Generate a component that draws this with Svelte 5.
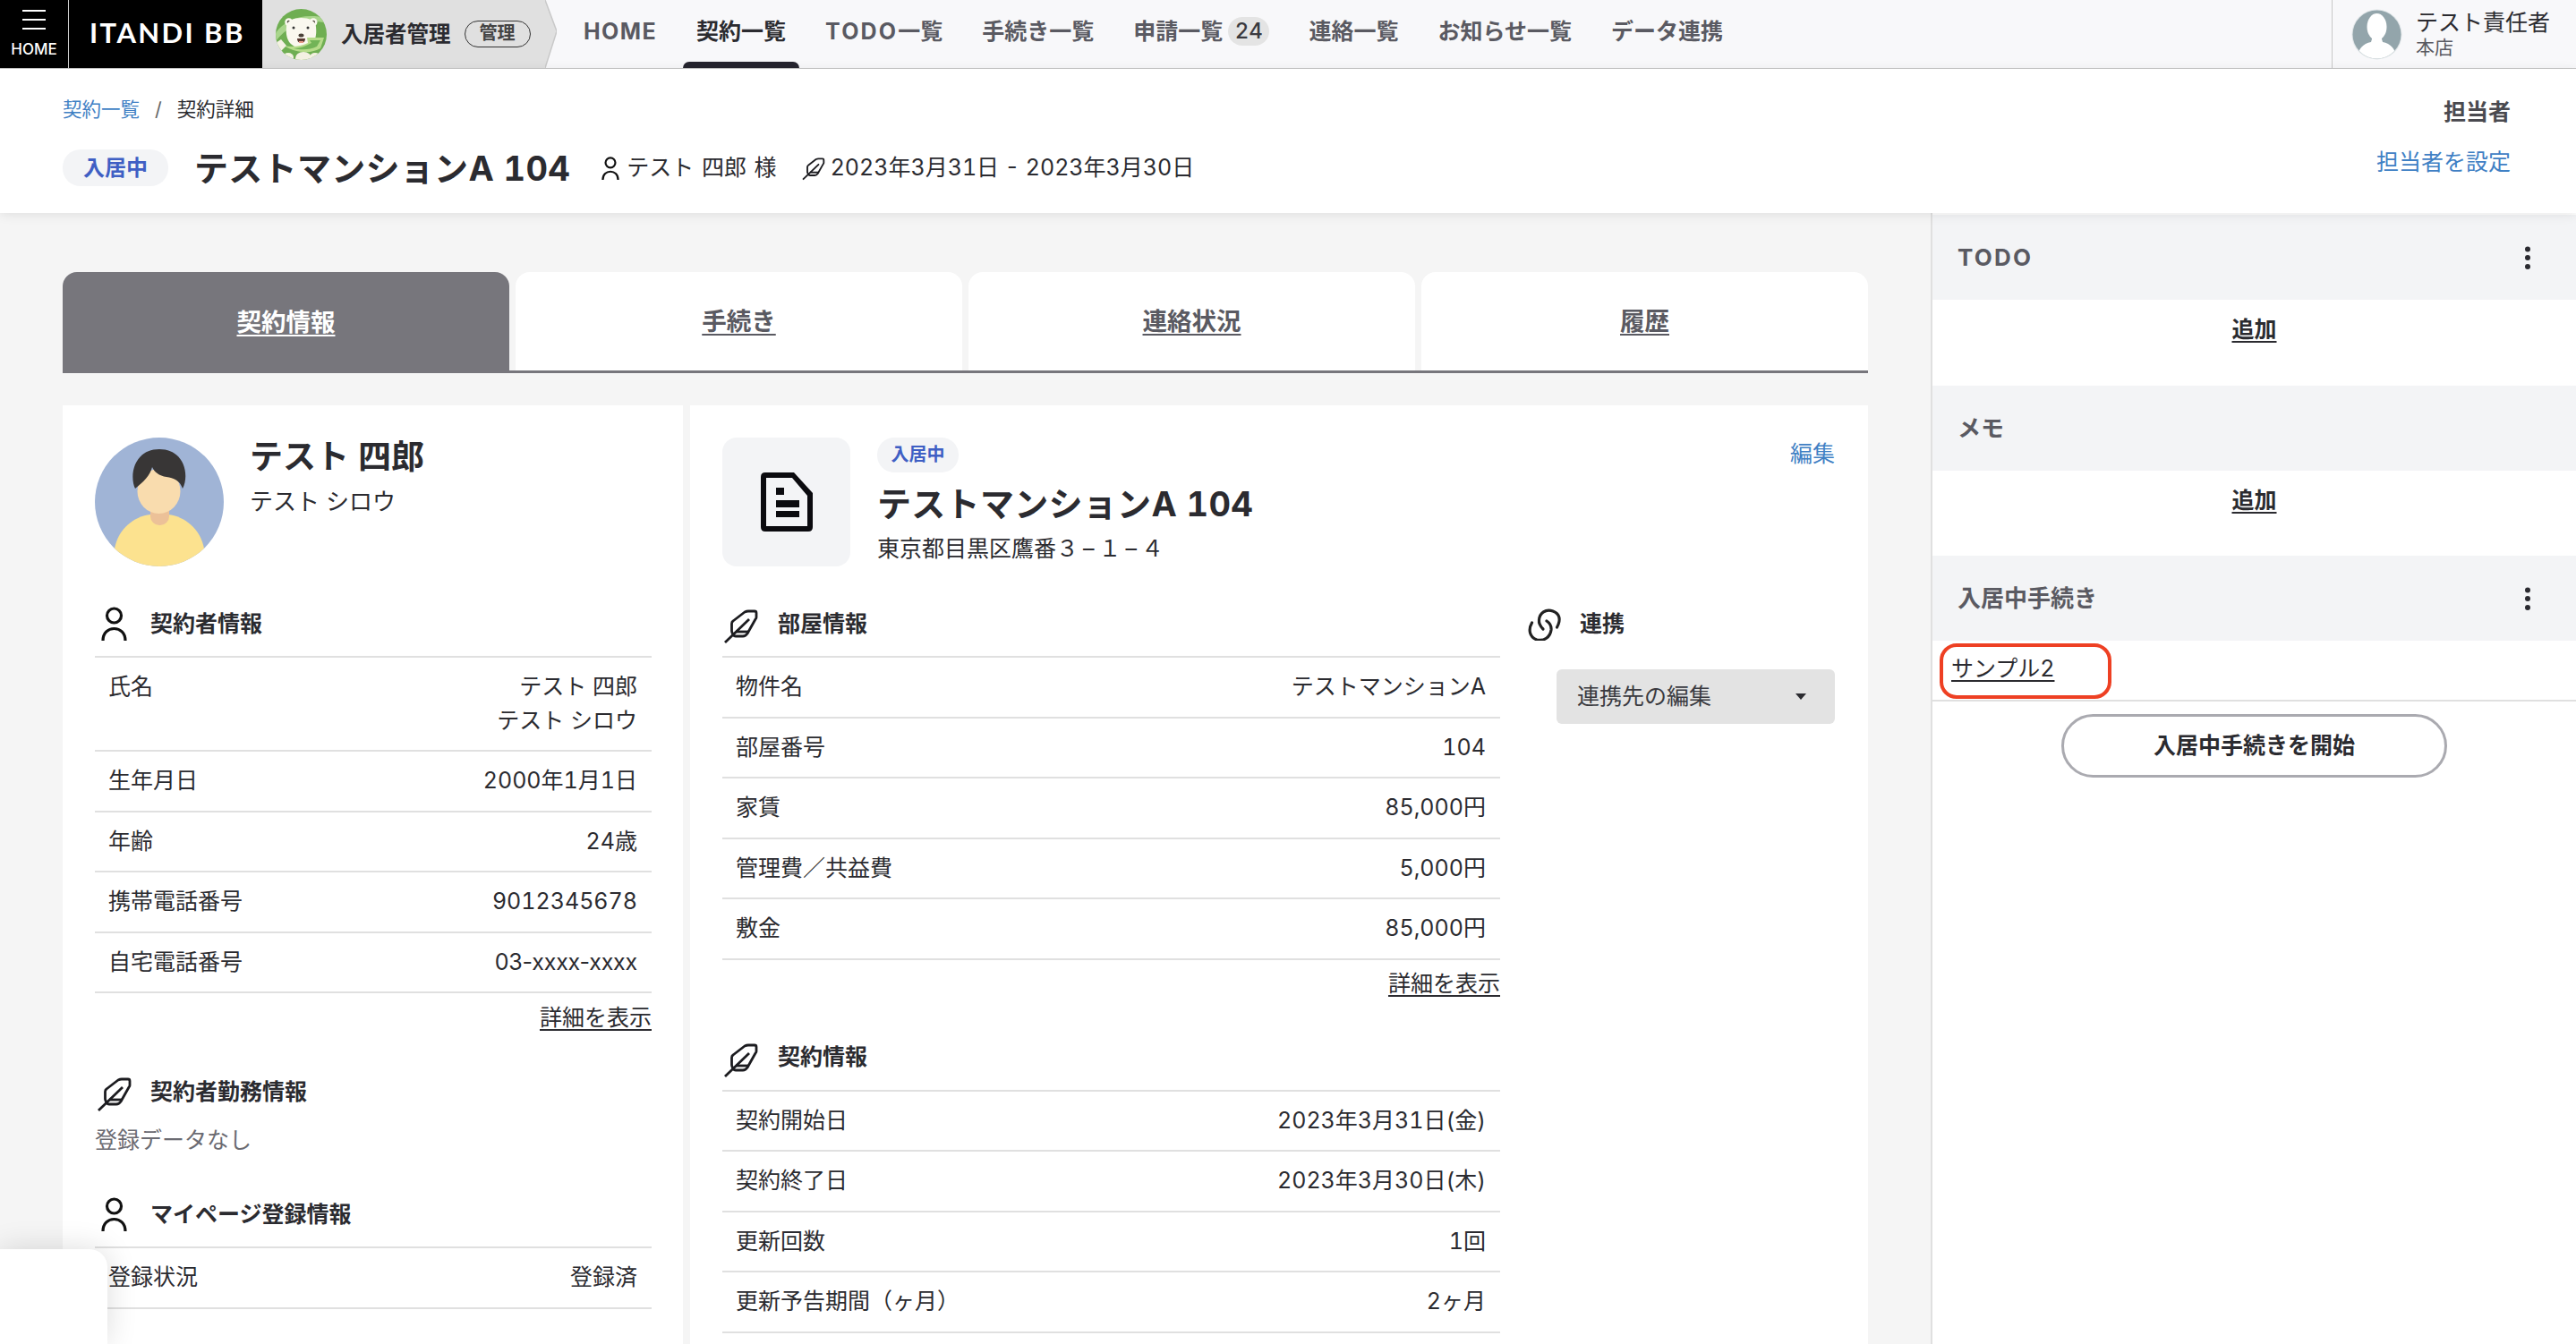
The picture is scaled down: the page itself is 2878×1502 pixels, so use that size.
<script>
  const nav2 = ['連絡一覧', 'お知らせ一覧', 'データ連携'];
  const tabs = ['契約情報', '手続き', '連絡状況', '履歴'];
  const contractor = [
    ['生年月日', '2000年1月1日'],
    ['年齢', '24歳'],
    ['携帯電話番号', '9012345678'],
    ['自宅電話番号', '03-xxxx-xxxx', 'prop-num']
  ];
  const room = [
    ['物件名', 'テストマンションA'],
    ['部屋番号', '104'],
    ['家賃', '85,000円'],
    ['管理費／共益費', '5,000円'],
    ['敷金', '85,000円']
  ];
  const contract = [
    ['契約開始日', '2023年3月31日(金)'],
    ['契約終了日', '2023年3月30日(木)'],
    ['更新回数', '1回'],
    ['更新予告期間（ヶ月）', '2ヶ月']
  ];
</script>

{#snippet person(cls)}
  <svg class={cls} viewBox="0 0 29 38" fill="none" stroke="#111" stroke-width="3.2">
    <circle cx="14.5" cy="10" r="8" />
    <path d="M2 38C2 29 8 24.500 14.500 24.500S27 29 27 38" />
  </svg>
{/snippet}

{#snippet feather(cls)}
  <svg class={cls} viewBox="8 8 40 42" fill="none" stroke="#1c1c20" stroke-width="2.800" stroke-linejoin="round">
    <path d="M17.500 27Q17.500 25 19 24L32 14Q34 13 36 13H43Q45 13 45 15V20Q45 21 44 22L35 38Q33 41 30 41H22Q20 41 19 39L18 37Q17.500 36 17.500 35Z" />
    <path d="M10 48L37 22" />
    <path d="M22 36H37" />
  </svg>
{/snippet}

{#snippet rows(list)}
  {#each list as r}
    <div class="row"><span>{r[0]}</span><span class={r[2]}>{r[1]}</span></div>
  {/each}
{/snippet}

{#snippet dots()}
  <svg class="dots" viewBox="0 0 8 26" fill="#2a2a30">
    <circle cx="4" cy="3.500" r="3" /><circle cx="4" cy="13" r="3" /><circle cx="4" cy="23" r="3" />
  </svg>
{/snippet}

<div class="page">
  <header class="top">
    <div class="ham">
      <span class="bars"><i></i><i></i><i></i></span>
      <span class="homelabel">HOME</span>
    </div>
    <div class="brand">ITANDI BB</div>
    <div class="product">
      <svg class="bear" viewBox="0 0 57 57">
        <defs><clipPath id="bearclip"><circle cx="28.500" cy="28.500" r="28.500" /></clipPath></defs>
        <g clip-path="url(#bearclip)">
          <rect width="57" height="57" fill="#6fae52" />
          <path d="M0 27C10 12 30 4 57 10V16C35 10 14 18 0 36Z" fill="#a9d58c" />
          <circle cx="14.700" cy="14.700" r="4.500" fill="#faf8ef" />
          <circle cx="42" cy="14.700" r="4.500" fill="#faf8ef" />
          <circle cx="14.700" cy="14.700" r="2" fill="#4a4138" />
          <circle cx="42" cy="14.700" r="2" fill="#4a4138" />
          <path d="M12 20C12 13 20 10 28.500 10C37 10 45 13 45 20C46 30 45 42 28.500 44C13 42 11 30 12 20Z" fill="#faf8ef" />
          <circle cx="20" cy="21" r="1.500" fill="#333" />
          <circle cx="36" cy="21" r="1.500" fill="#333" />
          <ellipse cx="28.500" cy="29.500" rx="3" ry="2" fill="#4a4138" />
          <path d="M24 33H33Q33 38 28.500 38Q24 38 24 33Z" fill="#5a3a33" />
          <path d="M26 36H31V38H26Z" fill="#e79a86" />
          <path d="M35 32H54L50 44C40 50 24 50 9 41C18 43 28 42 36 38Z" fill="#b6dc8a" />
          <path d="M38 35H50L46 42C38 46 28 46 20 44C28 44 34 41 40 38Z" fill="#72b457" />
          <ellipse cx="31" cy="55" rx="9" ry="7" fill="#f4f1e2" />
          <ellipse cx="14" cy="54" rx="6" ry="5" fill="#f4f1e2" />
          <ellipse cx="44" cy="54" rx="6" ry="5" fill="#f4f1e2" />
          <path d="M0 38L6 34L12 41L6 47Z" fill="#f4f1e2" />
        </g>
      </svg>
      <span class="pname">入居者管理</span>
      <span class="ptag">管理</span>
    </div>
    <svg class="chev" viewBox="0 0 13 76">
      <polygon points="0,0 13,35 0,76" fill="#e0e0e0" />
      <polyline points="0,0 13,35 0,76" fill="none" stroke="#c9c9c9" stroke-width="1.500" />
    </svg>
    <nav class="nav">
      <span class="navitem"><span class="lat home">HOME</span></span>
      <span class="navitem on">契約一覧</span>
      <span class="navitem"><span class="lat">TODO</span>一覧</span>
      <span class="navitem">手続き一覧</span>
      <span class="navitem">申請一覧<b class="badge">24</b></span>
      {#each nav2 as n}<span class="navitem">{n}</span>{/each}
    </nav>
    <div class="user">
      <svg class="uava" viewBox="0 0 57 57">
        <defs><clipPath id="uclip"><circle cx="28.500" cy="28.500" r="27" /></clipPath></defs>
        <circle cx="28.500" cy="28.500" r="28" fill="#dfe5e7" />
        <g clip-path="url(#uclip)">
          <rect width="57" height="57" fill="#93a5ab" />
          <ellipse cx="28.500" cy="20" rx="11" ry="15" fill="#fff" />
          <path d="M24 30H33L35 37C44 39 50 44 50 57H7C7 44 13 39 22 37Z" fill="#fff" />
        </g>
      </svg>
      <div class="uinfo">
        <span class="uname">テスト責任者</span>
        <span class="ustore">本店</span>
      </div>
    </div>
  </header>

  <section class="sub">
    <div>
      <div class="crumbs"><span class="blue">契約一覧</span><span class="slash">/</span><span>契約詳細</span></div>
      <div class="titlerow">
        <span class="pill big">入居中</span>
        <h1 class="title">テストマンションA 104</h1>
        {@render person('subicon person1')}
        <span class="meta tenant">テスト 四郎 様</span>
        {@render feather('subicon feather1')}
        <span class="meta">2023年3月31日 - 2023年3月30日</span>
      </div>
    </div>
    <div class="owner">
      <strong>担当者</strong>
      <span class="blue">担当者を設定</span>
    </div>
  </section>

  <div class="body">
    <main class="main">
      <div class="tabs">
        {#each tabs as t, i}
          <div class="tab" class:sel={i === 0}><span>{t}</span></div>
        {/each}
      </div>
      <div class="cards">
        <article class="card left">
          <div class="profile">
            <svg class="avatar" viewBox="0 0 144 144">
              <defs><clipPath id="avclip"><circle cx="72" cy="72" r="72" /></clipPath></defs>
              <circle cx="72" cy="72" r="72" fill="#a0b4d6" />
              <g clip-path="url(#avclip)">
                <path d="M22 124C26 102 44 88 62 86H82C100 88 118 102 122 124V144H22Z" fill="#fce28f" />
                <rect x="62" y="70" width="21" height="28" rx="10" fill="#ecc198" />
                <ellipse cx="71.500" cy="60" rx="24" ry="25" fill="#f9dcae" />
                <path d="M45 57C38 42 44 13 72 13C100 13 106 42 98 57C95 48 88 45 80 44C72 43 66 38 64 33C62 42 54 50 45 57Z" fill="#383636" />
              </g>
            </svg>
            <div>
              <div class="pername">テスト 四郎</div>
              <div class="perkana">テスト シロウ</div>
            </div>
          </div>

          <div class="head ruled">
            <span class="hicon">{@render person('hperson')}</span>
            <strong>契約者情報</strong>
          </div>
          <div class="row">
            <span>氏名</span>
            <span class="stack"><span>テスト 四郎</span><span>テスト シロウ</span></span>
          </div>
          {@render rows(contractor)}
          <div class="more"><u>詳細を表示</u></div>

          <div class="head spaced">
            <span class="hicon">{@render feather('hfeather')}</span>
            <strong>契約者勤務情報</strong>
          </div>
          <div class="none">登録データなし</div>

          <div class="head ruled spaced">
            <span class="hicon">{@render person('hperson')}</span>
            <strong>マイページ登録情報</strong>
          </div>
          <div class="row"><span>登録状況</span><span>登録済</span></div>
        </article>

        <article class="card right">
          <div class="prop">
            <div class="docbox">
              <svg class="doc" viewBox="0 0 58 66">
                <path fill-rule="evenodd" d="M5 0H37L58 23V61Q58 66 53 66H5Q0 66 0 61V5Q0 0 5 0ZM6 6V60H52V26L35 6Z" fill="#0b0b0f" />
                <path d="M17 17H26V25H17ZM17 31H43V39H17ZM17 43H43V50H17Z" fill="#0b0b0f" />
              </svg>
            </div>
            <div class="propinfo">
              <span class="pill small">入居中</span>
              <div class="proptitle">テストマンションA 104</div>
              <div class="addr">東京都目黒区鷹番<span class="addrnum">３–１–４</span></div>
            </div>
            <span class="blue edit">編集</span>
          </div>

          <div class="cols">
            <div class="colmain">
              <div class="head ruled">
                <span class="hicon">{@render feather('hfeather')}</span>
                <strong>部屋情報</strong>
              </div>
              {@render rows(room)}
              <div class="more"><u>詳細を表示</u></div>
              <div class="head ruled spaced">
                <span class="hicon">{@render feather('hfeather')}</span>
                <strong>契約情報</strong>
              </div>
              {@render rows(contract)}
            </div>
            <div class="colside">
              <div class="head plain">
                <span class="hicon">
                  <svg class="hlink" viewBox="7 7 38 38" fill="none" stroke="#222" stroke-width="3.200" stroke-linecap="round">
                    <path d="M39.500 30C44 22 43 15 35 12C27 9 20 14 19.500 22C19 26 21 29 24 32" />
                    <path d="M11.500 25C7 33 9 41 17 44C25 46 32 41 33 33C33.500 28 31 25 28 23" />
                  </svg>
                </span>
                <strong>連携</strong>
              </div>
              <div class="select"><span>連携先の編集</span><i class="caret"></i></div>
            </div>
          </div>
        </article>
      </div>
    </main>

    <aside class="side">
      <div class="sidehead"><span class="sidetodo">TODO</span>{@render dots()}</div>
      <div class="sidebody"><u>追加</u></div>
      <div class="sidehead"><span>メモ</span></div>
      <div class="sidebody"><u>追加</u></div>
      <div class="sidehead"><span>入居中手続き</span>{@render dots()}</div>
      <div class="procrow">
        <u>サンプル2</u>
        <span class="mark"></span>
      </div>
      <div class="startwrap"><span class="start">入居中手続きを開始</span></div>
    </aside>
  </div>

  <div class="widget"></div>
</div>

<style>
  :global(body) {
    margin: 0;
  }
  .page {
    position: relative;
    width: 2878px;
    height: 1502px;
    overflow: hidden;
    background: #f5f5f5;
    color: #2b2b30;
    font-family: "Inter", "Noto Sans CJK JP", sans-serif;
    font-variant-numeric: tabular-nums;
    font-size: 25px;
    line-height: 37px;
  }
  .top {
    display: flex;
    align-items: stretch;
    height: 76px;
    background: #f8f8fa;
    border-bottom: 1.5px solid #c8c8c8;
  }
  .ham {
    width: 77px;
    box-sizing: border-box;
    background: #000;
    border-right: 1px solid #d0d0d0;
    color: #fff;
    display: flex;
    flex-direction: column;
    align-items: center;
  }
  .bars {
    display: flex;
    flex-direction: column;
    gap: 8px;
    margin-top: 11px;
  }
  .bars i {
    display: block;
    width: 26px;
    height: 2px;
    background: #fff;
  }
  .homelabel {
    font-size: 17px;
    line-height: 20px;
    margin-top: 12px;
    font-weight: 500;
  }
  .brand {
    width: 216px;
    box-sizing: border-box;
    background: #000;
    color: #fff;
    padding-left: 23px;
    font-size: 31px;
    line-height: 73px;
    letter-spacing: 2.400px;
    font-family: "Lato", "Liberation Sans", sans-serif;
    font-weight: 700;
    white-space: nowrap;
  }
  .product {
    width: 316px;
    box-sizing: border-box;
    background: #e0e0e0;
    display: flex;
    align-items: center;
    padding-left: 15px;
  }
  .bear {
    width: 57px;
    height: 57px;
    flex: none;
  }
  .pname {
    margin-left: 16px;
    font-weight: 700;
    font-size: 24.500px;
    white-space: nowrap;
  }
  .ptag {
    margin-left: 15px;
    width: 74px;
    height: 30px;
    box-sizing: border-box;
    border: 1.500px solid #333;
    border-radius: 15px;
    text-align: center;
    font-size: 20px;
    line-height: 26px;
    font-weight: 700;
    color: #444;
  }
  .chev {
    width: 13px;
    height: 76px;
    flex: none;
  }
  .nav {
    display: flex;
    align-items: center;
    gap: 44px;
    margin-left: 30px;
  }
  .navitem {
    position: relative;
    display: flex;
    align-items: center;
    height: 76px;
    padding-bottom: 6px;
    box-sizing: border-box;
    font-weight: 700;
    color: #5a5a62;
    white-space: nowrap;
  }
  .lat {
    letter-spacing: 2.200px;
  }
  .lat.home {
    letter-spacing: 1.400px;
  }
  .navitem.on {
    color: #2b2b30;
  }
  .navitem.on::after {
    content: "";
    position: absolute;
    left: -15px;
    right: -15px;
    bottom: 0;
    height: 7px;
    background: #26252f;
    border-radius: 7px 7px 0 0;
  }
  .badge {
    margin-left: 6px;
    width: 46px;
    height: 32px;
    border-radius: 16px;
    background: #e4e4e4;
    color: #3a3a40;
    text-align: center;
    font-size: 24px;
    line-height: 32px;
    font-weight: 500;
  }
  .user {
    margin-left: auto;
    width: 273px;
    box-sizing: border-box;
    border-left: 1px solid #c8c8c8;
    display: flex;
    gap: 15px;
    padding-left: 21px;
    align-items: center;
  }
  .uava {
    width: 57px;
    height: 57px;
    flex: none;
  }
  .uinfo {
    display: flex;
    flex-direction: column;
  }
  .uname {
    line-height: 30px;
    white-space: nowrap;
  }
  .ustore {
    font-size: 21px;
    line-height: 26px;
    color: #5a5a62;
  }
  .sub {
    position: relative;
    z-index: 1;
    height: 161px;
    box-sizing: border-box;
    background: #fff;
    display: flex;
    justify-content: space-between;
    padding: 30px 73px 0 70px;
    box-shadow: 0 2px 12px rgba(0, 0, 0, 0.09);
  }
  .crumbs {
    display: flex;
    gap: 17px;
    font-size: 21.500px;
    line-height: 30px;
  }
  .slash {
    color: #666;
  }
  .blue {
    color: #3f80c4;
  }
  .titlerow {
    display: flex;
    align-items: center;
    margin-top: 30px;
    height: 41px;
  }
  .pill {
    display: inline-block;
    background: #f3f4f6;
    color: #3f5fc4;
    font-weight: 700;
    text-align: center;
  }
  .pill.big {
    width: 118px;
    height: 41px;
    border-radius: 20px;
    font-size: 24px;
    line-height: 41px;
  }
  .title {
    margin: 0 0 0 29px;
    font-size: 38px;
    line-height: 50px;
    font-weight: 700;
    letter-spacing: 0.300px;
    white-space: nowrap;
  }
  .subicon {
    flex: none;
  }
  .person1 {
    width: 20px;
    height: 26px;
    margin-left: 35px;
  }
  .feather1 {
    width: 28px;
    height: 28px;
    margin-left: 27px;
    margin-right: -3px;
  }
  .meta {
    margin-left: 8px;
    white-space: nowrap;
  }
  .meta.tenant {
    word-spacing: 2px;
  }
  .owner {
    display: flex;
    flex-direction: column;
    align-items: flex-end;
    gap: 19px;
    padding-top: 0;
  }
  .owner strong {
    color: #4a4a50;
  }
  .body {
    display: flex;
    height: 1264px;
  }
  .main {
    width: 2157px;
    box-sizing: border-box;
    padding: 66px 70px 0;
  }
  .tabs {
    display: grid;
    grid-template-columns: repeat(4, 1fr);
    column-gap: 7px;
    height: 113px;
    background: linear-gradient(#77767c, #77767c) bottom / 100% 3px no-repeat;
  }
  .tab {
    height: 110px;
    background: #fff;
    border-radius: 16px 16px 0 0;
    display: flex;
    align-items: center;
    justify-content: center;
    font-weight: 700;
    font-size: 27.500px;
    color: #5a5a62;
    text-decoration: underline;
    text-underline-offset: 4px;
  }
  .tab.sel {
    height: 113px;
    background: #77767c;
    color: #fff;
  }
  .cards {
    display: flex;
    gap: 8px;
    margin-top: 36px;
  }
  .card {
    background: #fff;
    height: 1100px;
    box-sizing: border-box;
    padding-top: 36px;
  }
  .card.left {
    width: 693px;
    padding-left: 36px;
    padding-right: 35px;
  }
  .card.right {
    flex: 1;
    padding-left: 36px;
    padding-right: 37px;
  }
  .profile {
    display: flex;
    gap: 29px;
  }
  .avatar {
    width: 144px;
    height: 144px;
    flex: none;
  }
  .pername {
    font-size: 37px;
    font-weight: 700;
    line-height: 44px;
    white-space: nowrap;
  }
  .perkana {
    margin-top: 9px;
    font-size: 26px;
    line-height: 37px;
  }
  .head {
    display: flex;
    align-items: center;
    height: 38px;
    margin-top: 45px;
  }
  .head strong {
    font-weight: 700;
    white-space: nowrap;
  }
  .head.ruled {
    box-sizing: content-box;
    padding-bottom: 17px;
    border-bottom: 2px solid #e0e0e0;
  }
  .head.plain {
    margin-left: -32px;
  }
  .hicon {
    width: 62px;
    flex: none;
    display: flex;
  }
  .colside .hicon {
    width: 58px;
  }
  .hperson {
    width: 29px;
    height: 38px;
    margin-left: 7px;
  }
  .hfeather {
    width: 40px;
    height: 42px;
    margin-left: 2px;
    margin-top: 4px;
  }
  .colmain .hfeather {
    margin-left: 1px;
  }
  .hlink {
    width: 38px;
    height: 38px;
  }
  .row {
    display: flex;
    justify-content: space-between;
    box-sizing: border-box;
    padding: 14px 16px 14px 15px;
    border-bottom: 2px solid #e0e0e0;
    white-space: nowrap;
    line-height: 37.500px;
  }
  .prop-num {
    font-variant-numeric: normal;
    letter-spacing: -0.200px;
  }
  .stack {
    display: flex;
    flex-direction: column;
    align-items: flex-end;
  }
  .more {
    text-align: right;
    margin-top: 9px;
  }
  .colmain .more {
    margin-top: 8px;
  }
  .more u {
    text-underline-offset: 4px;
  }
  .none {
    color: #6b6b72;
    margin-top: 17px;
  }
  .prop {
    display: flex;
    gap: 30px;
  }
  .docbox {
    width: 143px;
    height: 144px;
    border-radius: 16px;
    background: #f3f4f6;
    display: flex;
    align-items: center;
    justify-content: center;
    flex: none;
  }
  .doc {
    width: 58px;
    height: 66px;
  }
  .propinfo {
    flex: 1;
  }
  .pill.small {
    display: block;
    width: 91px;
    height: 39px;
    border-radius: 19px;
    font-size: 20px;
    line-height: 39px;
  }
  .proptitle {
    font-size: 38px;
    font-weight: 700;
    line-height: 50px;
    letter-spacing: 0.300px;
    margin-top: 10px;
    white-space: nowrap;
  }
  .addr {
    margin-top: 7px;
  }
  .addrnum {
    letter-spacing: 5px;
  }
  .edit {
    align-self: flex-start;
  }
  .cols {
    display: flex;
    gap: 63px;
  }
  .colmain {
    width: 869px;
    flex: none;
  }
  .colside {
    flex: 1;
  }
  .select {
    margin-top: 32px;
    height: 61px;
    border-radius: 6px;
    background: #e3e3e3;
    display: flex;
    align-items: center;
    justify-content: space-between;
    padding: 0 32px 0 23px;
    color: #3a3a40;
  }
  .caret {
    width: 0;
    height: 0;
    border-left: 6px solid transparent;
    border-right: 6px solid transparent;
    border-top: 7px solid #2b2b30;
  }
  .side {
    flex: 1;
    background: #fff;
    border-left: 2px solid #e0e0e0;
    padding-top: 2px;
    box-sizing: border-box;
  }
  .sidehead {
    height: 95px;
    background: #f3f4f6;
    display: flex;
    align-items: center;
    justify-content: space-between;
    padding: 0 50px 0 28px;
    font-weight: 700;
    font-size: 26px;
    color: #5a5a62;
    box-sizing: border-box;
  }
  .sidetodo {
    letter-spacing: 2.200px;
  }
  .dots {
    width: 8px;
    height: 26px;
  }
  .sidebody {
    height: 95.500px;
    box-sizing: border-box;
    padding-top: 15px;
    text-align: center;
    font-weight: 700;
  }
  .sidebody u {
    text-underline-offset: 4px;
  }
  .procrow {
    position: relative;
    height: 68px;
    box-sizing: border-box;
    border-bottom: 2px solid #e0e0e0;
    padding: 13px 0 0 21px;
  }
  .procrow u {
    text-underline-offset: 4px;
  }
  .mark {
    position: absolute;
    left: 8px;
    top: 3px;
    width: 192px;
    height: 62px;
    box-sizing: border-box;
    border: 4px solid #ee4023;
    border-radius: 19px;
  }
  .startwrap {
    display: flex;
    justify-content: center;
    margin-top: 14px;
  }
  .start {
    width: 431px;
    height: 71px;
    box-sizing: border-box;
    border: 3px solid #aaaab0;
    border-radius: 36px;
    text-align: center;
    line-height: 65px;
    font-weight: 700;
  }
  .widget {
    position: absolute;
    left: 0;
    top: 1396px;
    width: 120px;
    height: 106px;
    background: #fff;
    border-top-right-radius: 20px;
    box-shadow: 0 0 34px rgba(0, 0, 0, 0.14);
    z-index: 2;
  }
</style>
